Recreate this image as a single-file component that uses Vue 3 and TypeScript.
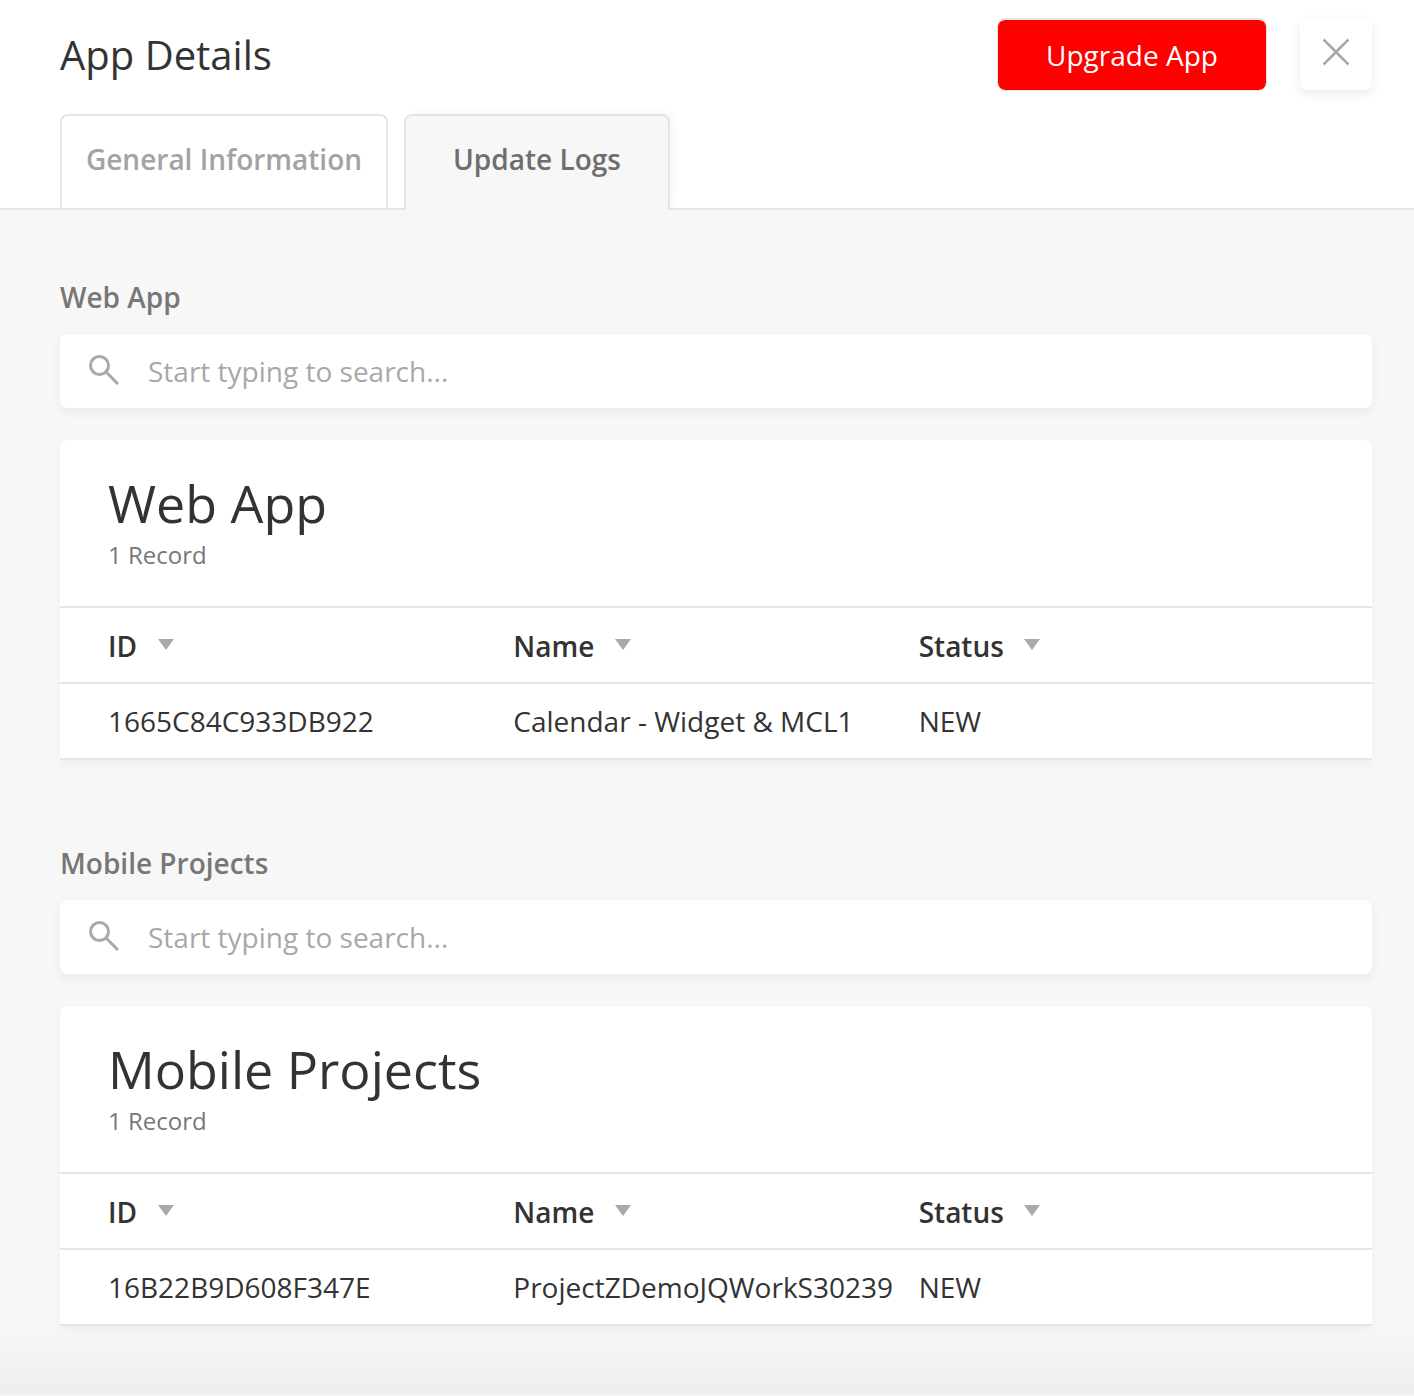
<script setup lang="ts">
interface Section { label: string; id: string; name: string; status: string }
const sections: Section[] = [
  { label: 'Web App', id: '1665C84C933DB922', name: 'Calendar - Widget & MCL1', status: 'NEW' },
  { label: 'Mobile Projects', id: '16B22B9D608F347E', name: 'ProjectZDemoJQWorkS30239', status: 'NEW' },
]
const columns = ['ID', 'Name', 'Status']
</script>

<template>
  <div class="page">
    <header class="top">
      <div class="head-row">
        <h1 class="title">App Details</h1>
        <button class="upgrade" type="button">Upgrade App</button>
        <button class="close" type="button" aria-label="Close">
          <svg width="28" height="28" viewBox="0 0 28 28"><path d="M1.5 1.5 26.5 26.5M26.5 1.5 1.5 26.5" stroke="#a9a9a9" stroke-width="2.6" fill="none" /></svg>
        </button>
      </div>
      <nav class="tabs">
        <div class="tab">General Information</div>
        <div class="tab active">Update Logs</div>
      </nav>
    </header>
    <main class="body">
      <section v-for="s in sections" :key="s.label" class="section">
        <h2 class="label">{{ s.label }}</h2>
        <div class="search">
          <svg class="glass" width="32" height="30" viewBox="0 0 32 30"><circle cx="11.5" cy="10.5" r="9" stroke="#a9a9a9" stroke-width="3" fill="none" /><path d="M18 17 30 29" stroke="#a9a9a9" stroke-width="3" fill="none" /></svg>
          <span class="placeholder">Start typing to search...</span>
        </div>
        <div class="card">
          <div class="card-head">
            <div class="card-title">{{ s.label }}</div>
            <div class="card-count">1 Record</div>
          </div>
          <div class="row head">
            <div v-for="c in columns" :key="c" class="cell">{{ c }}<span class="caret"></span></div>
          </div>
          <div class="row">
            <div class="cell">{{ s.id }}</div>
            <div class="cell">{{ s.name }}</div>
            <div class="cell">{{ s.status }}</div>
          </div>
        </div>
      </section>
    </main>
  </div>
</template>

<style>
html, body { margin: 0; background: #f7f7f7; }
</style>

<style scoped>
.page { width: 1414px; height: 1396px; overflow: hidden; display: flex; flex-direction: column; font-family: "Open Sans", "Liberation Sans", sans-serif; color: #333; }
.top { background: #fff; border-bottom: 2px solid #e5e5e5; height: 208px; padding: 0 42px 0 60px; }
.head-row { display: flex; align-items: flex-start; padding-top: 18px; height: 114px; box-sizing: border-box; }
.title { margin: 11px auto 0 0; font-size: 40px; line-height: 52px; font-weight: 400; color: #333; }
.upgrade { width: 270px; height: 73px; box-sizing: border-box; border-style: solid; border-color: #e5e5e5; border-width: 2px 1px 1px; border-radius: 8px; background: #f00; background-clip: padding-box; color: #fff; font: 400 28px/1 "Open Sans", sans-serif; padding: 0; }
.close { width: 72px; height: 72px; margin-left: 33px; border: 0; border-radius: 8px; background: #fff; box-shadow: 0 4px 12px rgba(0,0,0,.08); padding: 0 0 4px; display: flex; align-items: center; justify-content: center; }
.tabs { display: flex; gap: 16px; height: 96px; align-items: flex-start; }
.tab { box-sizing: border-box; height: 94px; width: 328px; border: 2px solid #e5e5e5; border-bottom: 0; border-radius: 8px 8px 0 0; background: #fff; font-size: 28px; font-weight: 600; color: #a3a3a3; text-align: center; line-height: 87px; white-space: nowrap; }
.tab.active { width: 266px; height: 96px; background: #f7f7f7; color: #6e6e6e; box-shadow: 4px -2px 10px rgba(0,0,0,.03); }
.body { flex: 1; padding: 68px 42px 0 60px; background: linear-gradient(to bottom, #f7f7f7 0, #f7f7f7 calc(100% - 66px), #eeeeee calc(100% - 2px), #f7f7f7 100%); }
.section + .section { margin-top: 84px; }
.label { margin: 0 0 18px; font-size: 28px; line-height: 38px; font-weight: 600; color: #777; }
.search { height: 74px; background: #fff; border-radius: 8px; box-shadow: 0 4px 12px rgba(0,0,0,.06); display: flex; align-items: center; padding-left: 28px; }
.glass { margin: 0 28px 0 0; position: relative; top: -1px; }
.placeholder { font-size: 28px; line-height: 38px; color: #a8a8a8; }
.card { margin-top: 32px; background: #fff; border-radius: 8px 8px 0 0; box-shadow: 0 4px 12px rgba(0,0,0,.04); }
.card-head { box-sizing: border-box; padding: 29px 48px 0; border-bottom: 2px solid #e5e5e5; height: 168px; }
.card-title { font-size: 52px; line-height: 68px; color: #333; }
.card-count { font-size: 24px; line-height: 32px; color: #777; margin-top: 2px; }
.row { display: grid; grid-template-columns: repeat(3, 1fr); padding: 0 48px; height: 76px; box-sizing: border-box; border-bottom: 2px solid #e5e5e5; align-items: center; font-size: 28px; color: #333; }
.row.head { font-weight: 600; }
.row.head .cell { padding-top: 1px; box-sizing: border-box; }
.cell { white-space: nowrap; line-height: 74px; height: 74px; display: flex; align-items: center; }
.caret { width: 0; height: 0; border-left: 8.5px solid transparent; border-right: 8.5px solid transparent; border-top: 11px solid #a9a9a9; margin: -3px 0 0 20.5px; }
</style>
